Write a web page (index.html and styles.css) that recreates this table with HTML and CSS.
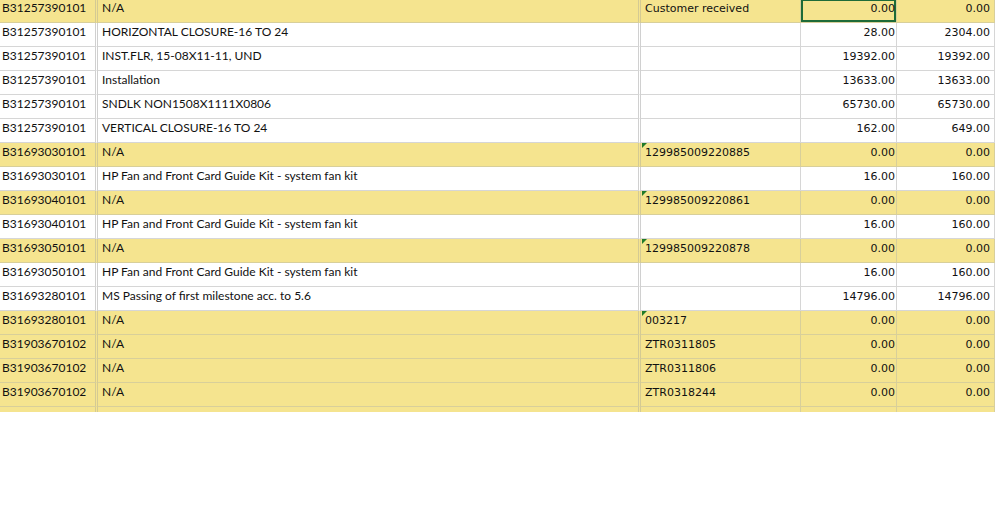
FILE: index.html
```html
<!DOCTYPE html>
<html>
<head>
<meta charset="utf-8">
<link rel="stylesheet" href="styles.css">
</head>
<body>
<div class="sheet">
  <div class="row hl"><div class="c c1">B31257390101</div><div class="c c2">N/A</div><div class="c c3">Customer received</div><div class="c c4 sel">0.00</div><div class="c c5">0.00</div></div>
  <div class="row"><div class="c c1">B31257390101</div><div class="c c2">HORIZONTAL CLOSURE-16 TO 24</div><div class="c c3"></div><div class="c c4">28.00</div><div class="c c5">2304.00</div></div>
  <div class="row"><div class="c c1">B31257390101</div><div class="c c2">INST.FLR, 15-08X11-11, UND</div><div class="c c3"></div><div class="c c4">19392.00</div><div class="c c5">19392.00</div></div>
  <div class="row"><div class="c c1">B31257390101</div><div class="c c2">Installation</div><div class="c c3"></div><div class="c c4">13633.00</div><div class="c c5">13633.00</div></div>
  <div class="row"><div class="c c1">B31257390101</div><div class="c c2">SNDLK NON1508X1111X0806</div><div class="c c3"></div><div class="c c4">65730.00</div><div class="c c5">65730.00</div></div>
  <div class="row"><div class="c c1">B31257390101</div><div class="c c2">VERTICAL CLOSURE-16 TO 24</div><div class="c c3"></div><div class="c c4">162.00</div><div class="c c5">649.00</div></div>
  <div class="row hl"><div class="c c1">B31693030101</div><div class="c c2">N/A</div><div class="c c3 flag">129985009220885</div><div class="c c4">0.00</div><div class="c c5">0.00</div></div>
  <div class="row"><div class="c c1">B31693030101</div><div class="c c2">HP Fan and Front Card Guide Kit - system fan kit</div><div class="c c3"></div><div class="c c4">16.00</div><div class="c c5">160.00</div></div>
  <div class="row hl"><div class="c c1">B31693040101</div><div class="c c2">N/A</div><div class="c c3 flag">129985009220861</div><div class="c c4">0.00</div><div class="c c5">0.00</div></div>
  <div class="row"><div class="c c1">B31693040101</div><div class="c c2">HP Fan and Front Card Guide Kit - system fan kit</div><div class="c c3"></div><div class="c c4">16.00</div><div class="c c5">160.00</div></div>
  <div class="row hl"><div class="c c1">B31693050101</div><div class="c c2">N/A</div><div class="c c3 flag">129985009220878</div><div class="c c4">0.00</div><div class="c c5">0.00</div></div>
  <div class="row"><div class="c c1">B31693050101</div><div class="c c2">HP Fan and Front Card Guide Kit - system fan kit</div><div class="c c3"></div><div class="c c4">16.00</div><div class="c c5">160.00</div></div>
  <div class="row"><div class="c c1">B31693280101</div><div class="c c2">MS Passing of first milestone acc. to 5.6</div><div class="c c3"></div><div class="c c4">14796.00</div><div class="c c5">14796.00</div></div>
  <div class="row hl"><div class="c c1">B31693280101</div><div class="c c2">N/A</div><div class="c c3 flag">003217</div><div class="c c4">0.00</div><div class="c c5">0.00</div></div>
  <div class="row hl"><div class="c c1">B31903670102</div><div class="c c2">N/A</div><div class="c c3">ZTR0311805</div><div class="c c4">0.00</div><div class="c c5">0.00</div></div>
  <div class="row hl"><div class="c c1">B31903670102</div><div class="c c2">N/A</div><div class="c c3">ZTR0311806</div><div class="c c4">0.00</div><div class="c c5">0.00</div></div>
  <div class="row hl"><div class="c c1">B31903670102</div><div class="c c2">N/A</div><div class="c c3">ZTR0318244</div><div class="c c4">0.00</div><div class="c c5">0.00</div></div>
  <div class="row hl stub"><div class="c c1"></div><div class="c c2"></div><div class="c c3"></div><div class="c c4"></div><div class="c c5"></div></div>
</div>
</body>
</html>
```

FILE: styles.css
```css
html, body {
  margin: 0;
  padding: 0;
  background: #ffffff;
}
.sheet {
  margin-top: -1px;
  width: 995px;
  display: flex;
  flex-direction: column;
}
.row {
  display: grid;
  grid-template-columns: 98px 543px 160px 96px 98px;
  height: 24px;
  background: #ffffff;
}
.row.hl {
  background: #f5e48f;
}
.row.stub {
  height: 5px;
}
.c {
  position: relative;
  box-sizing: border-box;
  height: 24px;
  border-bottom: 1px solid #d6d6d6;
  border-right: 1px solid #d6d6d6;
  font-family: "DejaVu Sans", Verdana, sans-serif;
  font-size: 11px;
  line-height: 14px;
  padding-top: 3px;
  color: #111111;
  white-space: nowrap;
  overflow: hidden;
}
.hl .c {
  border-bottom-color: #d8cf9a;
  border-right-color: #d8cf9a;
}
.stub .c {
  height: 5px;
  border-bottom: none;
}
.c1, .c2 {
  font-family: Lato, "Liberation Sans", sans-serif;
  font-size: 12px;
  padding-top: 2px;
}
.c1 {
  padding-left: 2px;
  border-right: 3px double #d0d0d0;
}
.c2 {
  padding-left: 4px;
  border-right: 3px double #d0d0d0;
}
.hl .c1, .hl .c2 {
  border-right: 3px double #d4ca93;
}
.c3 {
  padding-left: 4px;
}
.c4, .c5 {
  text-align: right;
  padding-right: 1px;
}
.c5 {
  padding-right: 4px;
}
.flag::before {
  content: "";
  position: absolute;
  left: 1px;
  top: 0;
  width: 0;
  height: 0;
  border-top: 5px solid #1f7a2a;
  border-right: 5px solid transparent;
}
.sel {
  box-shadow: inset 0 0 0 2px #1e6b38;
  border-right-color: #1e6b38;
  border-bottom-color: #1e6b38;
}
```
